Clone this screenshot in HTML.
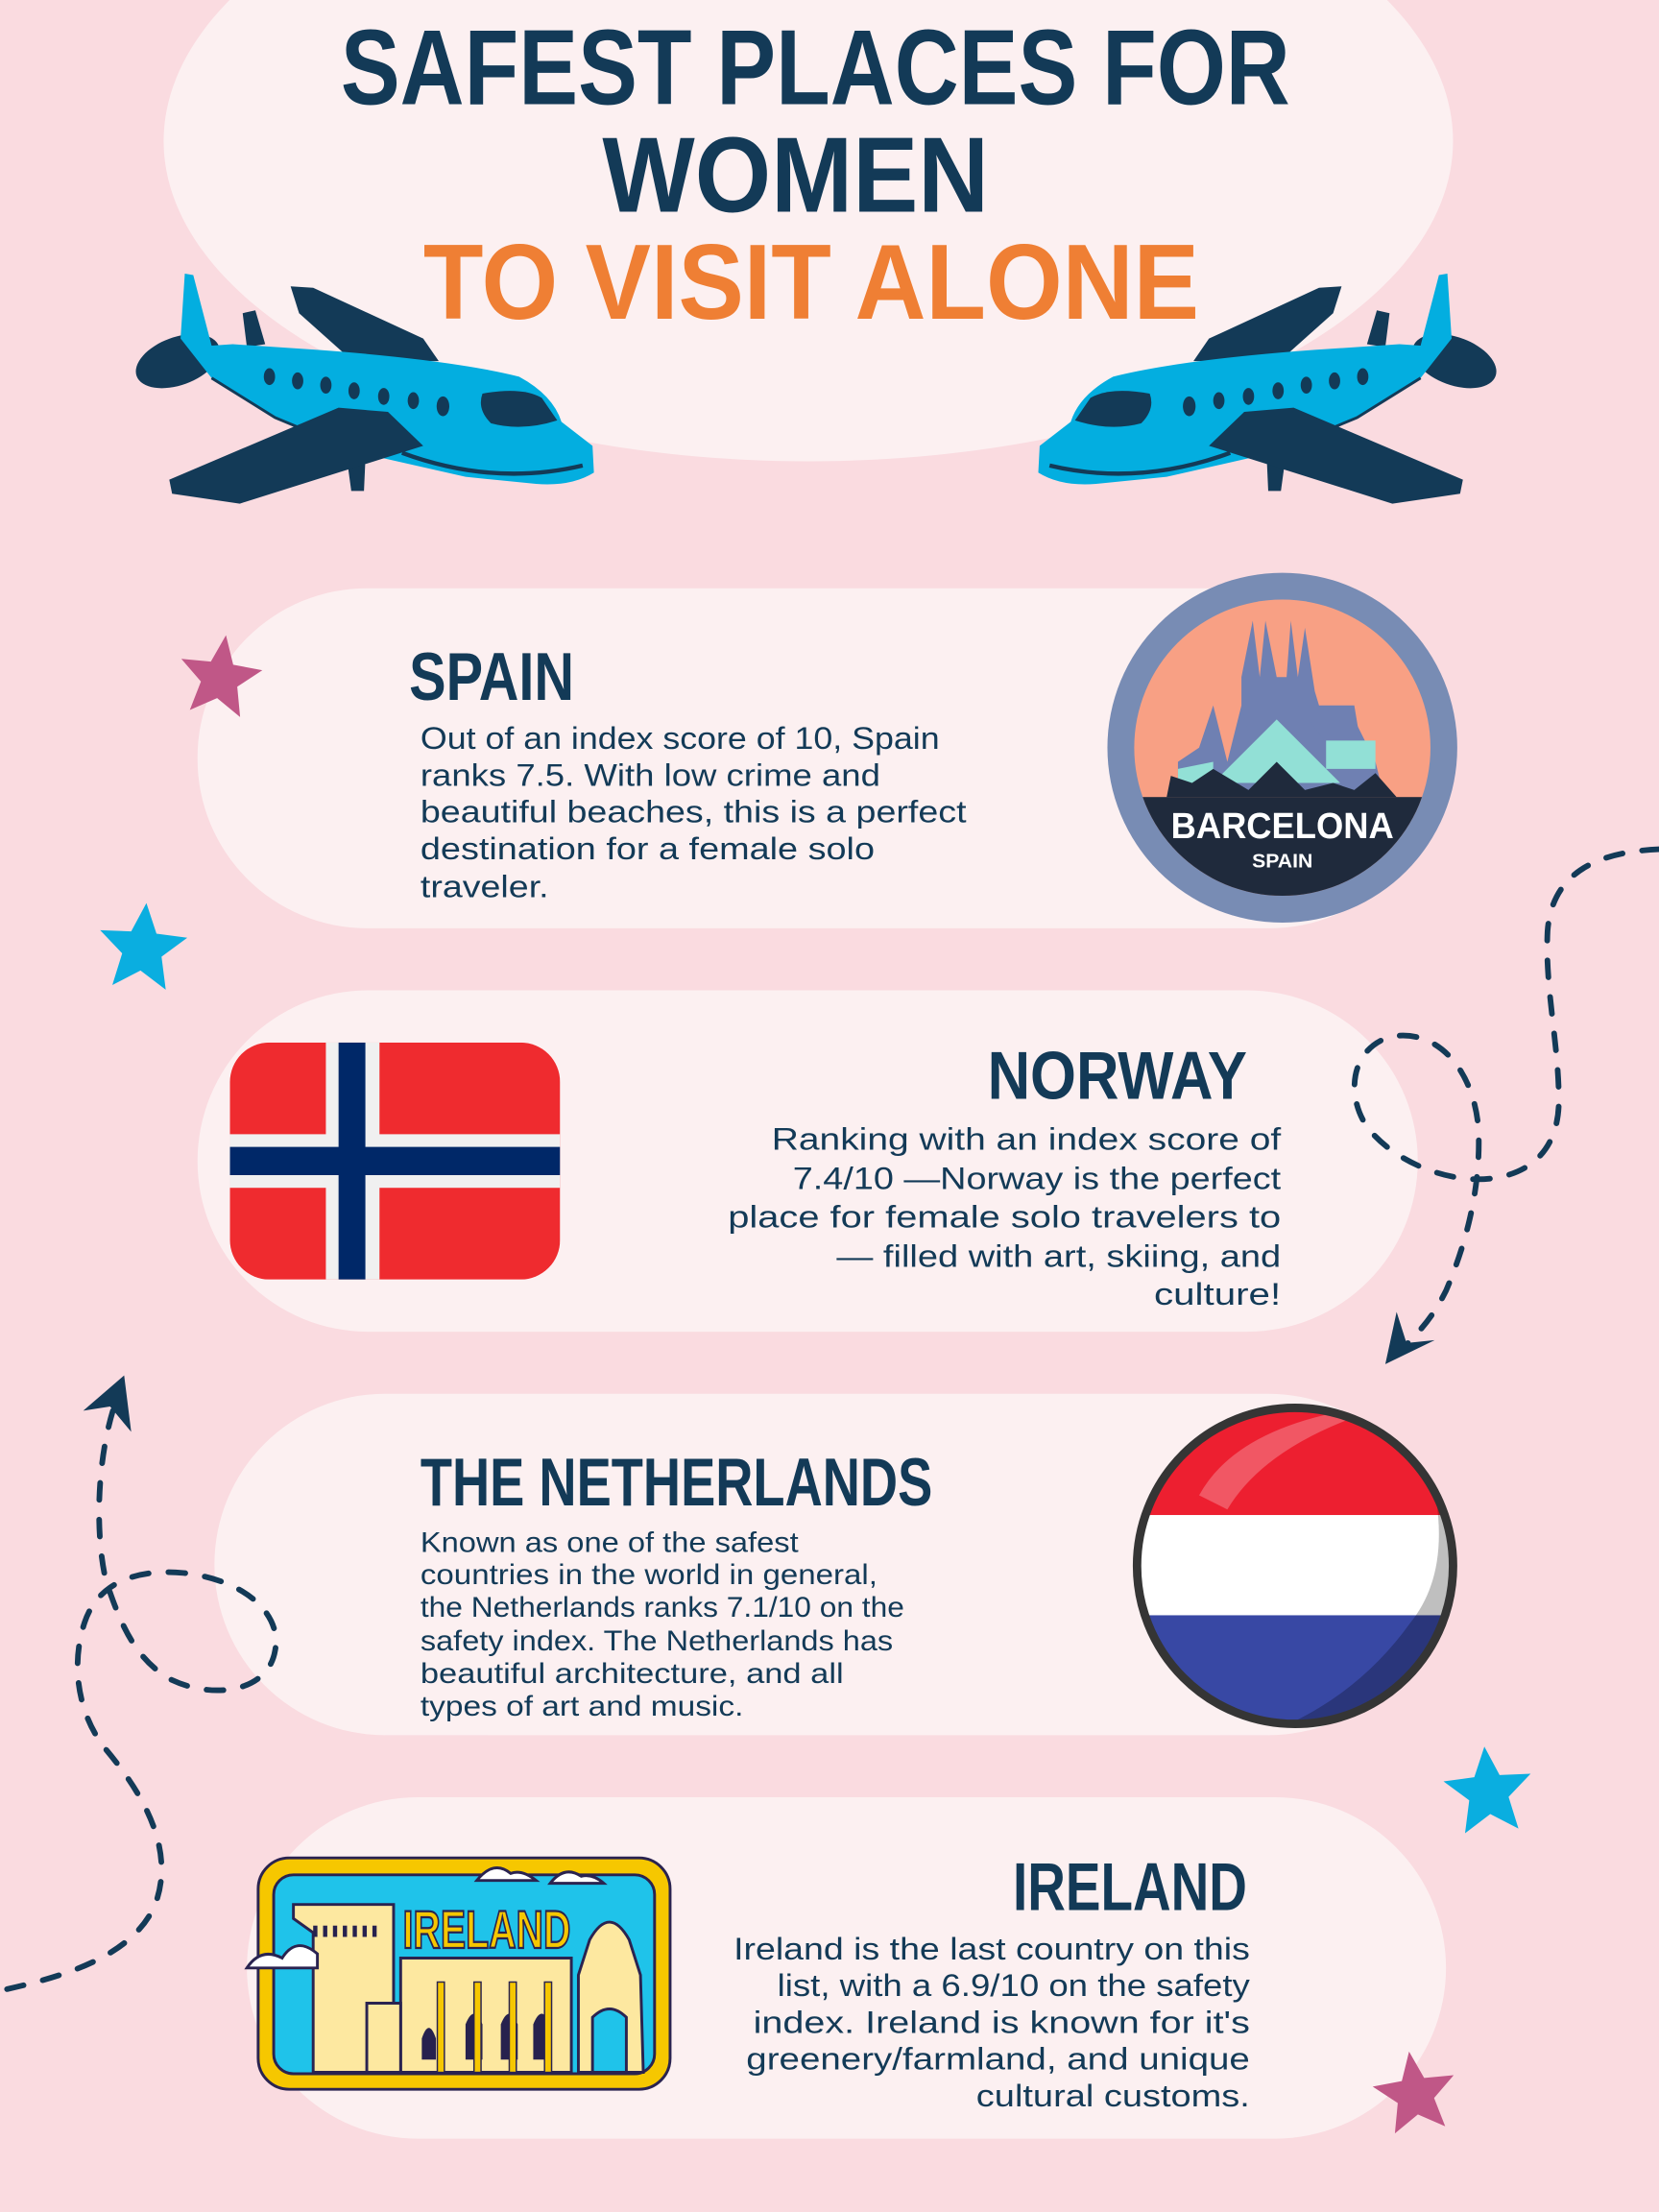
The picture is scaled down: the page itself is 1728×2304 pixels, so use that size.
<!DOCTYPE html>
<html><head><meta charset="utf-8"><style>
html,body{margin:0;padding:0;background:#fadbe0}
svg{display:block}
text{font-family:"Liberation Sans",sans-serif}
</style></head><body>
<svg width="1728" height="2304" viewBox="0 0 1176 1568" xmlns="http://www.w3.org/2000/svg">
<rect width="1176" height="1568" fill="#fadbe0"/>
<ellipse cx="573" cy="100" rx="457" ry="227" fill="#fcf0f1"/>
<rect x="140" y="417" width="880" height="241" rx="120" fill="#fcf0f1"/>
<rect x="140" y="702" width="865" height="242" rx="121" fill="#fcf0f1"/>
<rect x="152" y="988" width="868" height="242" rx="121" fill="#fcf0f1"/>
<rect x="175" y="1274" width="850" height="242" rx="121" fill="#fcf0f1"/>

<g font-weight="bold">
<text x="578" y="74" text-anchor="middle" font-size="76" fill="#133a57" textLength="673" lengthAdjust="spacingAndGlyphs">SAFEST PLACES FOR</text>
<text x="564" y="150" text-anchor="middle" font-size="76" fill="#133a57" textLength="274" lengthAdjust="spacingAndGlyphs">WOMEN</text>
<text x="575" y="226" text-anchor="middle" font-size="76" fill="#ef7f34" textLength="550" lengthAdjust="spacingAndGlyphs">TO VISIT ALONE</text>
</g>

<g id="plane">
<ellipse cx="126" cy="256" rx="31" ry="17" transform="rotate(-20 126 256)" fill="#133a57"/>
<path d="M172,222 L181,220 L188,244 L175,246Z" fill="#133a57"/>
<path d="M206,203 L222,204 L300,240 L311,256 L250,256 L212,222Z" fill="#133a57"/>
<path d="M131,194 L137,195 L150,245 L165,244 L225,248 Q320,255 368,267 Q392,280 398,299 L420,316 L421,335 Q405,345 380,343 L330,338 L255,321 L195,296 L150,268 L128,240Z" fill="#03aee0"/>
<path d="M150,268 L195,296 L255,321" stroke="#133a57" stroke-width="2" fill="none"/>
<path d="M285,321 Q350,345 413,330" stroke="#133a57" stroke-width="3" fill="none"/>
<g fill="#133a57">
<ellipse cx="191" cy="267" rx="4" ry="6"/><ellipse cx="211" cy="270" rx="4" ry="6"/><ellipse cx="231" cy="273" rx="4" ry="6"/><ellipse cx="251" cy="277" rx="4" ry="6"/><ellipse cx="272" cy="281" rx="4" ry="6"/><ellipse cx="293" cy="284" rx="4" ry="6"/><ellipse cx="314" cy="288" rx="4.5" ry="7"/>
<path d="M342,279 Q370,274 384,282 L395,298 Q370,306 348,300 Q338,290 342,279Z"/>
<path d="M246,326 L259,326 L258,348 L249,348Z"/>
<path d="M240,289 L275,292 L300,316 L170,357 L122,350 L120,340Z"/>
</g>
</g>
<use href="#plane" transform="translate(1157,0) scale(-1,1)"/>

<g>
<path d="M0,-30 L8,-10 L29,-9 L13,5 L18,26 L0,15 L-18,26 L-13,5 L-29,-9 L-8,-10Z" fill="#c05787" transform="translate(156,480) rotate(8)"/>
<path d="M0,-32 L9,-11 L31,-10 L14,5 L19,28 L0,16 L-19,28 L-14,5 L-31,-10 L-9,-11Z" fill="#0aaee0" transform="translate(101,672) rotate(5)"/>
<path d="M0,-32 L9,-11 L31,-10 L14,5 L19,28 L0,16 L-19,28 L-14,5 L-31,-10 L-9,-11Z" fill="#0aaee0" transform="translate(1055,1270) rotate(-5)"/>
<path d="M0,-30 L8,-10 L29,-9 L13,5 L18,26 L0,15 L-18,26 L-13,5 L-29,-9 L-8,-10Z" fill="#c05787" transform="translate(1003,1484) rotate(-8)"/>
</g>

<g fill="none" stroke="#133a57" stroke-width="4" stroke-linecap="round" stroke-dasharray="12 14">
<path d="M1176,602 C1130,604 1100,620 1097,660 C1095,700 1105,740 1105,780 C1105,810 1090,830 1060,835 C1030,840 990,825 970,800 C955,780 955,745 985,735 C1020,728 1045,760 1048,800 C1050,840 1040,880 1025,915 C1015,935 1005,945 995,955"/>
<path d="M5,1410 C50,1400 95,1385 110,1350 C125,1310 100,1270 75,1240 C55,1215 50,1180 60,1150 C70,1120 100,1112 130,1115 C175,1120 200,1145 195,1170 C190,1200 150,1205 120,1190 C95,1175 85,1150 75,1120 C68,1090 68,1040 80,1000"/>
</g>
<path d="M982,967 L990,930 L997,952 L1017,950Z" fill="#133a57"/>
<path d="M88,975 L59,1000 L78,997 L93,1015Z" fill="#133a57"/>

<text x="290" y="496" font-size="48" font-weight="bold" fill="#133a57" textLength="117" lengthAdjust="spacingAndGlyphs">SPAIN</text>
<g font-size="22" fill="#133a57" lengthAdjust="spacingAndGlyphs">
<text x="298" y="531" textLength="368" lengthAdjust="spacingAndGlyphs">Out of an index score of 10, Spain</text>
<text x="298" y="557" textLength="326" lengthAdjust="spacingAndGlyphs">ranks 7.5. With low crime and</text>
<text x="298" y="583" textLength="387" lengthAdjust="spacingAndGlyphs">beautiful beaches, this is a perfect</text>
<text x="298" y="609" textLength="322" lengthAdjust="spacingAndGlyphs">destination for a female solo</text>
<text x="298" y="636" textLength="91" lengthAdjust="spacingAndGlyphs">traveler.</text>
</g>
<defs><clipPath id="bc"><circle cx="909" cy="530" r="105"/></clipPath>
<clipPath id="nl"><circle cx="918" cy="1110" r="111"/></clipPath></defs>
<circle cx="909" cy="530" r="124" fill="#788cb4"/>
<g clip-path="url(#bc)">
<rect x="800" y="420" width="220" height="220" fill="#f8a084"/>
<path d="M880,560 L880,480 L888,440 L893,480 L897,440 L905,480 L912,480 L915,440 L920,480 L925,445 L932,490 L935,500 L960,500 L970,560Z" fill="#6f80b2"/>
<path d="M835,560 L835,540 L850,530 L860,500 L870,540 L880,500 L890,540 L900,520 L920,500 L950,540 L960,510 L975,540 L980,560Z" fill="#6f80b2"/>
<path d="M860,555 L905,510 L950,555Z" fill="#92e0d6"/>
<path d="M940,525 L975,525 L975,545 L940,545Z" fill="#92e0d6"/>
<path d="M835,545 L860,540 L860,560 L835,560Z" fill="#92e0d6"/>
<rect x="790" y="565" width="240" height="80" fill="#1f2a3c"/>
<path d="M827,565 L830,550 L845,555 L860,545 L885,560 L905,540 L925,560 L945,555 L960,560 L975,548 L990,565Z" fill="#1f2a3c"/>
</g>
<text x="909" y="594" text-anchor="middle" font-size="26" font-weight="bold" fill="#fff" textLength="158" lengthAdjust="spacingAndGlyphs">BARCELONA</text>
<text x="909" y="615" text-anchor="middle" font-size="14" font-weight="bold" fill="#fff" textLength="43" lengthAdjust="spacingAndGlyphs">SPAIN</text>

<defs><clipPath id="nf"><rect x="163" y="739" width="234" height="168" rx="28"/></clipPath></defs>
<g clip-path="url(#nf)">
<rect x="163" y="739" width="234" height="168" fill="#ef2b2f"/>
<rect x="163" y="804" width="234" height="38" fill="#f0f0f0"/>
<rect x="231" y="739" width="38" height="168" fill="#f0f0f0"/>
<rect x="163" y="813" width="234" height="20" fill="#002868"/>
<rect x="240" y="739" width="19" height="168" fill="#002868"/>
</g>
<text x="884" y="779" text-anchor="end" font-size="48" font-weight="bold" fill="#133a57" textLength="184" lengthAdjust="spacingAndGlyphs">NORWAY</text>
<g font-size="22" fill="#133a57" text-anchor="end">
<text x="908" y="815" textLength="361" lengthAdjust="spacingAndGlyphs">Ranking with an index score of</text>
<text x="908" y="843" textLength="346" lengthAdjust="spacingAndGlyphs">7.4/10 —Norway is the perfect</text>
<text x="908" y="870" textLength="392" lengthAdjust="spacingAndGlyphs">place for female solo travelers to</text>
<text x="908" y="898" textLength="315" lengthAdjust="spacingAndGlyphs">— filled with art, skiing, and</text>
<text x="908" y="925" textLength="90" lengthAdjust="spacingAndGlyphs">culture!</text>
</g>

<text x="298" y="1067" font-size="48" font-weight="bold" fill="#133a57" textLength="363" lengthAdjust="spacingAndGlyphs">THE NETHERLANDS</text>
<g font-size="20" fill="#133a57">
<text x="298" y="1100" textLength="268" lengthAdjust="spacingAndGlyphs">Known as one of the safest</text>
<text x="298" y="1123" textLength="324" lengthAdjust="spacingAndGlyphs">countries in the world in general,</text>
<text x="298" y="1146" textLength="343" lengthAdjust="spacingAndGlyphs">the Netherlands ranks 7.1/10 on the</text>
<text x="298" y="1170" textLength="335" lengthAdjust="spacingAndGlyphs">safety index. The Netherlands has</text>
<text x="298" y="1193" textLength="300" lengthAdjust="spacingAndGlyphs">beautiful architecture,  and all</text>
<text x="298" y="1216" textLength="229" lengthAdjust="spacingAndGlyphs">types of art and music.</text>
</g>
<g clip-path="url(#nl)">
<rect x="800" y="990" width="240" height="84" fill="#ed1f30"/>
<rect x="800" y="1074" width="240" height="71" fill="#ffffff"/>
<rect x="800" y="1145" width="240" height="90" fill="#3848a4"/>
<path d="M1000,1000 Q1040,1100 1000,1150 Q950,1220 860,1240 L1040,1240 L1040,990Z" fill="#000" opacity="0.25"/>
<path d="M850,1060 Q880,1005 990,995 Q900,1020 870,1070Z" fill="#fff" opacity="0.25"/>
</g>
<circle cx="918" cy="1110" r="112" fill="none" stroke="#353535" stroke-width="6"/>

<text x="884" y="1354" text-anchor="end" font-size="48" font-weight="bold" fill="#133a57" textLength="166" lengthAdjust="spacingAndGlyphs">IRELAND</text>
<g font-size="22" fill="#133a57" text-anchor="end">
<text x="886" y="1389" textLength="366" lengthAdjust="spacingAndGlyphs">Ireland is the last country on this</text>
<text x="886" y="1415" textLength="335" lengthAdjust="spacingAndGlyphs">list, with a 6.9/10 on the safety</text>
<text x="886" y="1441" textLength="352" lengthAdjust="spacingAndGlyphs">index. Ireland is known for it's</text>
<text x="886" y="1467" textLength="357" lengthAdjust="spacingAndGlyphs">greenery/farmland, and unique</text>
<text x="886" y="1493" textLength="194" lengthAdjust="spacingAndGlyphs">cultural customs.</text>
</g>
<g stroke="#2a2350" stroke-width="2">
<rect x="183" y="1317" width="292" height="164" rx="22" fill="#f6c700"/>
<rect x="194" y="1329" width="270" height="141" rx="14" fill="#1fc3ea"/>
<path d="M208,1350 L279,1350 L279,1469 L222,1469 L222,1370 L208,1360Z" fill="#fde8a0"/>
<path d="M284,1388 L405,1388 L405,1469 L284,1469Z" fill="#fde8a0"/>
<path d="M410,1400 L418,1375 Q432,1350 446,1375 L454,1400 L456,1469 L410,1469Z" fill="#fde8a0"/>
<path d="M420,1430 Q432,1418 444,1430 L444,1469 L420,1469Z" fill="#1fc3ea"/>
<path d="M260,1469 L260,1420 L284,1420 L284,1469Z" fill="#fde8a0"/>
<path d="M175,1395 Q185,1380 200,1388 Q210,1372 225,1385 L225,1395Z" fill="#fff"/>
<path d="M338,1333 Q350,1318 362,1328 Q370,1325 380,1333Z" fill="#fff"/>
<path d="M390,1335 Q400,1322 412,1330 Q420,1328 428,1335Z" fill="#fff"/>
</g>
<g fill="#27214e">
<rect x="222" y="1365" width="3" height="8"/><rect x="229" y="1365" width="3" height="8"/><rect x="236" y="1365" width="3" height="8"/><rect x="243" y="1365" width="3" height="8"/><rect x="250" y="1365" width="3" height="8"/><rect x="257" y="1365" width="3" height="8"/><rect x="264" y="1365" width="3" height="8"/>
<path d="M299,1445 Q304,1430 309,1445 L309,1460 L299,1460Z"/><path d="M330,1435 Q336,1420 342,1435 L342,1460 L330,1460Z"/><path d="M355,1435 Q361,1420 367,1435 L367,1460 L355,1460Z"/><path d="M378,1435 Q384,1420 390,1435 L390,1460 L378,1460Z"/>
</g>
<g fill="#f6c700" stroke="#2a2350" stroke-width="1">
<rect x="310" y="1405" width="5" height="64"/><rect x="336" y="1405" width="5" height="64"/><rect x="361" y="1405" width="5" height="64"/><rect x="386" y="1405" width="5" height="64"/>
</g>
<text x="345" y="1381" text-anchor="middle" font-size="38" font-weight="bold" fill="#f6c700" stroke="#2a2350" stroke-width="1.5" textLength="119" lengthAdjust="spacingAndGlyphs">IRELAND</text>
</svg>
</body></html>
